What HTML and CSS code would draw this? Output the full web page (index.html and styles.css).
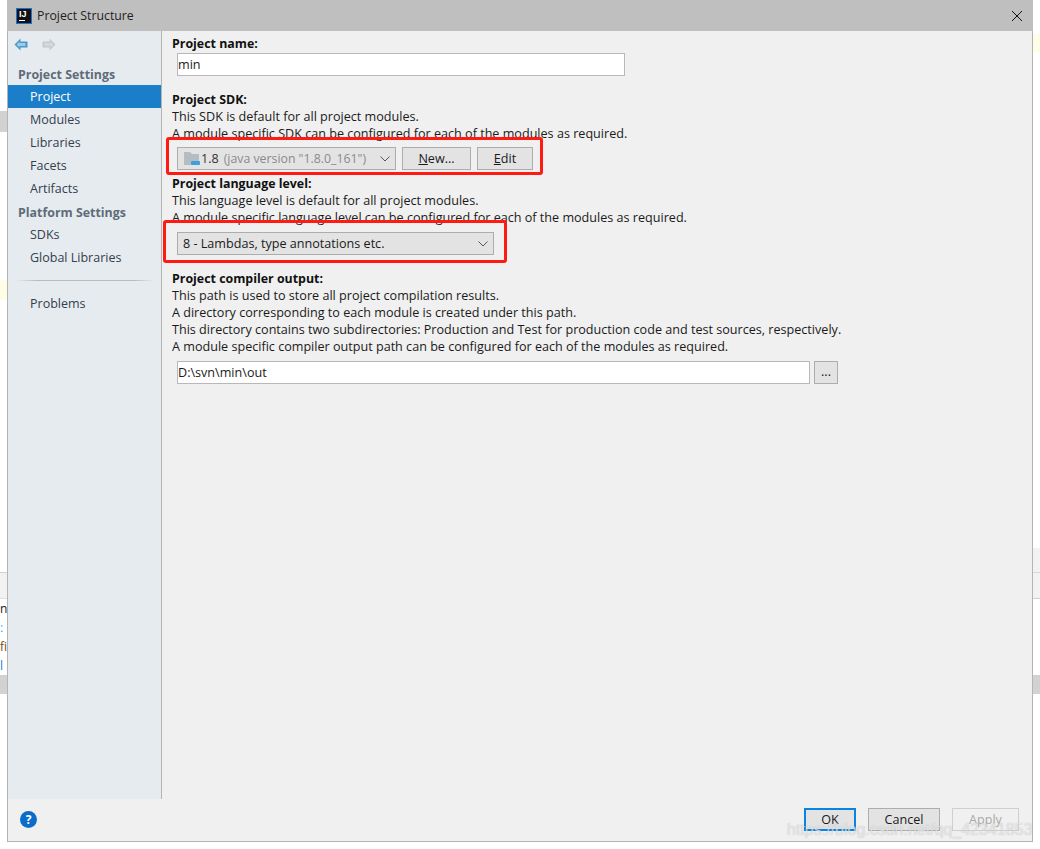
FILE: index.html
```html
<!DOCTYPE html>
<html lang="en">
<head>
<meta charset="utf-8">
<title>Project Structure</title>
<link rel="stylesheet" href="styles.css">
</head>
<body>
<div class="backdrop">
  <div class="bg-patch bg-gray-top"></div>
  <div class="bg-patch bg-yellow"></div>
  <div class="bg-patch bg-line"></div>
  <div class="bg-patch bg-band-left"></div>
  <div class="bg-patch bg-band-right"></div>
  <div class="bg-patch bg-yellow-right"></div>
  <div class="bg-patch bg-line-right"></div>
  <div class="bg-letters"><span class="l-n">n</span><span class="l-c">:</span><span class="l-f">fi</span><span class="l-b">l</span></div>
</div>
<div class="window">
  <header class="titlebar">
    <span class="logo"><span class="logo-t">IJ</span><span class="logo-u"></span></span>
    <span class="title">Project Structure</span>
    <svg class="close" width="12" height="12" viewBox="0 0 12 12"><path d="M1 1l10 10M11 1L1 11" stroke="#111" stroke-width="1" fill="none"/></svg>
  </header>
  <div class="main">
    <aside class="sidebar">
      <div class="nav-arrows">
        <svg width="14" height="13" viewBox="0 0 14 13"><path d="M6.500 0.500L0.500 6.500l6 6V9.500h7v-6h-7z" fill="#4a97c9"/><path d="M5.500 3.500L2.500 6.500l3 3V8h6V5h-6z" fill="#9ccbe6"/></svg>
        <svg width="14" height="13" viewBox="0 0 14 13"><path d="M7.500 0.500l6 6-6 6V9.500h-7v-6h7z" fill="#c6c9cc"/><path d="M8.500 3.500l3 3-3 3V8h-6V5h6z" fill="#d6d9dc"/></svg>
      </div>
      <div class="group">Project Settings</div>
      <div class="item selected">Project</div>
      <div class="item">Modules</div>
      <div class="item">Libraries</div>
      <div class="item">Facets</div>
      <div class="item">Artifacts</div>
      <div class="group group-2">Platform Settings</div>
      <div class="item">SDKs</div>
      <div class="item">Global Libraries</div>
      <div class="sep"></div>
      <div class="item">Problems</div>
    </aside>
    <main class="content">
      <div class="label l-name">Project name:</div>
      <div class="input name-input">min</div>
      <div class="label l-sdk">Project SDK:</div>
      <div class="line">This SDK is default for all project modules.</div>
      <div class="line">A module specific SDK can be configured for each of the modules as required.</div>
      <div class="sdk-row">
        <div class="combo sdk-combo">
          <svg class="folder" width="17" height="15" viewBox="0 0 17 15"><path d="M0 1h6l2 2h7v11H0z" fill="#b4bdc4"/><rect x="7" y="10" width="9" height="4" rx="1" fill="#3f9fd6"/></svg>
          <span class="sdk-ver">1.8</span><span class="sdk-desc">(java version "1.8.0_161")</span>
          <svg class="chev" width="10" height="6" viewBox="0 0 10 6"><path d="M0.500 0.500L5 5l4.500-4.500" stroke="#555" fill="none"/></svg>
        </div>
        <div class="btn btn-new"><u>N</u>ew...</div>
        <div class="btn btn-edit"><u>E</u>dit</div>
      </div>
      <div class="label l-lang">Project language level:</div>
      <div class="line">This language level is default for all project modules.</div>
      <div class="line">A module specific language level can be configured for each of the modules as required.</div>
      <div class="combo lang-combo">
        <span>8 - Lambdas, type annotations etc.</span>
        <svg class="chev" width="10" height="6" viewBox="0 0 10 6"><path d="M0.500 0.500L5 5l4.500-4.500" stroke="#555" fill="none"/></svg>
      </div>
      <div class="label l-out">Project compiler output:</div>
      <div class="line">This path is used to store all project compilation results.</div>
      <div class="line">A directory corresponding to each module is created under this path.</div>
      <div class="line">This directory contains two subdirectories: Production and Test for production code and test sources, respectively.</div>
      <div class="line">A module specific compiler output path can be configured for each of the modules as required.</div>
      <div class="out-row">
        <div class="input out-input">D:\svn\min\out</div>
        <div class="btn btn-dots">...</div>
      </div>
    </main>
  </div>
  <footer class="footer">
    <span class="help">?</span>
    <div class="footer-btns">
      <div class="btn fbtn default">OK</div>
      <div class="btn fbtn">Cancel</div>
      <div class="btn fbtn disabled">Apply</div>
    </div>
  </footer>
</div>
<div class="mark mark-sdk"></div>
<div class="mark mark-lang"></div>
<div class="watermark">https://blog.csdn.net/qq_42341853</div>
</body>
</html>
```
FILE: styles.css
```css
* { box-sizing: border-box; }
html, body { margin: 0; height: 100%; }
body { width: 1040px; height: 849px; overflow: hidden; background: #fff; font-family: "Open Sans", "Noto Sans", sans-serif; font-size: 12.6px; color: #1a1a1a; position: relative; }
.backdrop { position: absolute; inset: 0; }
.bg-patch { position: absolute; }
.bg-gray-top { left: 0; top: 111px; width: 7px; height: 21px; background: #d2d2d2; }
.bg-yellow { left: 0; top: 280px; width: 7px; height: 20px; background: #fffde6; }
.bg-line { left: 0; top: 572px; width: 7px; height: 27px; background: #f2f2f2; border-top: 1px solid #d0d0d0; border-bottom: 1px solid #e0e0e0; }
.bg-band-left { left: 0; top: 675px; width: 7px; height: 19px; background: #d2d2d2; }
.bg-band-right { left: 1033px; top: 675px; width: 7px; height: 19px; background: #d2d2d2; }
.bg-yellow-right { left: 1033px; top: 34px; width: 7px; height: 18px; background: #fffde6; }
.bg-line-right { left: 1033px; top: 548px; width: 7px; height: 51px; background: linear-gradient(#f2f2f2 0 24px, #d8d8d8 24px 25px, #f2f2f2 25px 50px, #d0d0d0 50px); }
.bg-letters { position: absolute; left: 0; top: 599px; width: 7px; height: 76px; overflow: hidden; font-size: 12px; line-height: 19px; }
.bg-letters span { display: block; }
.l-c { color: #4aa8e8; }
.l-f { color: #7a4a10; }
.l-b { color: #1a7fd0; }
.window { position: absolute; left: 7px; top: 0; width: 1026px; height: 842px; background: #f0f0f0; border: 1px solid #b4b4b4; border-top: 0; display: flex; flex-direction: column; }
.titlebar { height: 31px; margin: 0 -1px; background: #bfbfbf; display: flex; align-items: center; padding-left: 9px; flex: none; }
.logo { width: 16px; height: 16px; background: #111; border: 1px solid #1b6fd0; position: relative; display: block; margin-right: 5px; }
.logo-t { position: absolute; left: 2px; top: 1px; color: #fff; font: bold 9px/9px "Liberation Sans", sans-serif; }
.logo-u { position: absolute; left: 2px; top: 11px; width: 6px; height: 1px; background: #fff; }
.title { font-size: 12.3px; color: #222; }
.close { margin-left: auto; margin-right: 10px; }
.main { flex: 1; display: flex; min-height: 0; }
.sidebar { width: 154px; background: #e6ebf0; border-right: 1px solid #b4b4b4; flex: none; }
.nav-arrows { height: 26px; display: flex; align-items: center; gap: 14px; padding-left: 6px; }
.group { height: 22px; line-height: 23px; margin-top: 6px; padding-left: 10px; font-weight: 700; font-size: 12.4px; color: #5f6b78; }
.group-2 { margin-top: 1px; }
.item { height: 23px; line-height: 23px; padding-left: 22px; color: #34404c; font-size: 12.5px; }
.selected { background: #1a7ec8; color: #fff; }
.sep { height: 1px; margin: 11px 6px 11px 8px; background: linear-gradient(90deg, #e6ebf0, #b8bcc0 15%, #b8bcc0 85%, #e6ebf0); }
.content { flex: 1; padding: 4px 0 0 10px; }
.label { font-weight: 700; font-size: 12.4px; line-height: 17px; color: #111; }
.line { line-height: 17px; color: #1a1a1a; white-space: nowrap; }
.input { background: #fff; border: 1px solid #b8b8b8; line-height: 21px; height: 23px; padding-left: 0; }
.name-input { width: 448px; margin-left: 5px; margin-top: 1px; }
.l-sdk { margin-top: 15px; }
.sdk-row { display: flex; margin: 5px 0 0 5px; gap: 6px; }
.combo { display: flex; align-items: center; background: #e3e3e3; border: 1px solid #adadad; height: 23px; position: relative; }
.sdk-combo { width: 219px; padding-left: 6px; color: #8a8a8a; }
.sdk-ver { color: #333; margin-right: 5px; }
.sdk-desc { font-size: 12.3px; }
.chev { position: absolute; right: 5px; top: 8px; }
.btn { display: flex; align-items: center; justify-content: center; background: #e3e3e3; border: 1px solid #adadad; height: 23px; color: #1a1a1a; }
.btn-new { width: 69px; }
.btn-edit { width: 56px; margin-left: 0; }
.l-lang { margin-top: 5px; }
.lang-combo { width: 317px; margin: 6px 0 0 5px; padding-left: 5px; }
.l-out { margin-top: 15px; }
.out-row { display: flex; margin: 6px 0 0 5px; gap: 4px; }
.out-input { width: 633px; }
.btn-dots { width: 24px; padding-bottom: 3px; }
.footer { height: 42px; flex: none; position: relative; display: flex; align-items: flex-start; }
.help { position: absolute; left: 12px; top: 12px; width: 17px; height: 17px; border-radius: 50%; background: #0d6cc8; color: #fff; font-weight: 700; font-size: 12px; line-height: 17px; text-align: center; }
.footer-btns { margin-left: auto; margin-right: 13px; margin-top: 9px; display: flex; gap: 12px; }
.fbtn { width: 72px; height: 23px; }
.fbtn:first-child { width: 52px; }
.default { border: 2px solid #0a84e0; }
.disabled { border-color: #cfcfcf; background: #f0f0f0; color: #a8a8a8; width: 67px; }
.mark { position: absolute; border: 3px solid #ff1a12; border-radius: 3px; }
.mark-sdk { left: 166px; top: 137px; width: 377px; height: 38px; }
.mark-lang { left: 163px; top: 220px; width: 344px; height: 43px; }
.watermark { position: absolute; left: 787px; top: 821px; font-family: "Liberation Sans", sans-serif; font-size: 16px; color: rgba(255,255,255,.6); white-space: nowrap; text-shadow: 0 0 1px rgba(120,120,120,.5); }
```
